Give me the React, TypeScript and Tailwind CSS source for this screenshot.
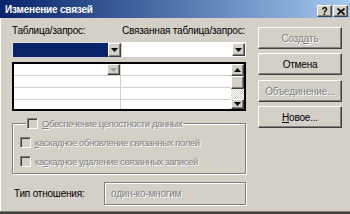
const raised =
  'border border-t-white border-l-white border-r-[#404040] border-b-[#404040] shadow-[inset_-1px_-1px_0_#808080] bg-[#d4d0c8]';
const disabledText = 'text-[#808080] [text-shadow:1px_1px_0_#fff]';

function Arrow({ up = false, color = '#000' }: { up?: boolean; color?: string }) {
  return (
    <svg width="7" height="4" viewBox="0 0 7 4">
      <polygon points={up ? '3.5,0 7,4 0,4' : '0,0 7,0 3.5,4'} fill={color} />
    </svg>
  );
}

function DropButton({ h = 'h-[13px]', color = '#000' }: { h?: string; color?: string }) {
  return (
    <div className={`${raised} w-[13px] ${h} flex items-center justify-center shrink-0`}>
      <Arrow color={color} />
    </div>
  );
}

function CheckBox() {
  return (
    <div className="w-[11px] h-[11px] shrink-0 border border-t-[#808080] border-l-[#808080] border-r-white border-b-white shadow-[inset_1px_1px_0_#404040] bg-[#d4d0c8]" />
  );
}

function Btn({ children, disabled = false, className = '' }: { children: React.ReactNode; disabled?: boolean; className?: string }) {
  return (
    <div className={`${raised} h-[22px] flex items-center justify-center ${disabled ? disabledText : 'text-black'} ${className}`}>
      {children}
    </div>
  );
}

const checkLabel = `text-[9.5px] tracking-[-0.4px] ${disabledText}`;

export default function App() {
  return (
    <div className="w-[350px] h-[214px] bg-[#d4d0c8] overflow-hidden flex flex-col font-['Liberation_Sans',Arial,sans-serif] text-[10px] tracking-[-0.2px] leading-[13px] whitespace-nowrap text-black">
      <div className="h-[18px] shrink-0 flex bg-linear-to-r from-[#0a246a] to-[#a6caf0] pl-[5px] pr-[2px]">
        <span className="self-center font-bold text-white text-[10px]">Изменение связей</span>
        <div className="ml-auto self-end mb-[1px] flex gap-[1px]">
          <div className={`${raised} w-[15px] h-[12px] flex items-center justify-center font-bold text-[10px]`}>?</div>
          <div className={`${raised} w-[15px] h-[12px] flex items-center justify-center`}>
            <svg width="8" height="7" viewBox="0 0 8 7">
              <path d="M0.5 0.5 L7.5 6.5 M7.5 0.5 L0.5 6.5" stroke="#000" strokeWidth="1.6" />
            </svg>
          </div>
        </div>
      </div>

      <div className="flex-1 flex border-l border-white pl-[11px]">
        <div className="w-[234px] flex flex-col pt-[6px]">
          <div className="flex h-[13px]">
            <span className="w-[110px]">Таблица/запрос:</span>
            <span>Связанная таблица/запрос:</span>
          </div>

          <div className="flex h-[15px] mt-[5px] gap-[1px]">
            <div className="w-[109px] flex bg-[#0a246a] border-t border-l border-[#e4e4e4]">
              <div className="flex-1" />
              <DropButton h="h-[14px]" />
            </div>
            <div className="flex-1 flex bg-white pt-[1px] pr-[1px]">
              <div className="flex-1" />
              <DropButton />
            </div>
          </div>

          <div className="h-[49px] mt-[5px] border-2 border-black bg-white flex">
            <div className="flex-1 flex flex-col">
              {[0, 1, 2, 3].map((i) => (
                <div key={i} className={`flex ${i < 3 ? 'h-[12px] border-b border-[#d4d0c8]' : 'flex-1'}`}>
                  <div className="w-[107px] flex justify-end border-r border-[#d4d0c8]">
                    {i === 0 && <DropButton h="h-[11px]" color="#a0a0a0" />}
                  </div>
                  <div className="flex-1" />
                </div>
              ))}
            </div>
            <div className="w-[13px] flex flex-col">
              <div className={`${raised} h-[12px] flex items-center justify-center`}>
                <Arrow up />
              </div>
              <div className={`${raised} h-[13px]`} />
              <div className="flex-1 bg-[conic-gradient(#fff_25%,#d4d0c8_0_50%,#fff_0_75%,#d4d0c8_0)] bg-size-[2px_2px]" />
              <div className={`${raised} h-[10px] flex items-center justify-center`}>
                <Arrow />
              </div>
            </div>
          </div>

          <fieldset className="mt-[6px] h-[57px] border border-[#808080] shadow-[1px_1px_0_#fff,inset_1px_1px_0_#fff] pl-[7px] flex flex-col">
            <legend className="ml-[6px] px-[1px] bg-[#d4d0c8]">
              <div className="flex items-center gap-[4px] h-[13px]">
                <CheckBox />
                <span className={checkLabel}>
                  <u>О</u>беспечение целостности данных
                </span>
              </div>
            </legend>
            <div className="flex items-center gap-[4px] h-[13px] mt-[6px]">
              <CheckBox />
              <span className={checkLabel}>
                <u>к</u>аскадное обновление связанных полей
              </span>
            </div>
            <div className="flex items-center gap-[4px] h-[13px] mt-[6px]">
              <CheckBox />
              <span className={checkLabel}>
                ка<u>с</u>кадное удаление связанных записей
              </span>
            </div>
          </fieldset>

          <div className="flex items-center mt-[8px] h-[23px]">
            <span className="w-[92px] pl-[2px]">Тип отношения:</span>
            <div className={`flex-1 h-full flex items-center pl-[6px] border border-[#808080] shadow-[1px_1px_0_#fff,inset_1px_1px_0_#fff] ${disabledText}`}>
              один-ко-многим
            </div>
          </div>
        </div>

        <div className="w-[84px] ml-[12px] pt-[9px] flex flex-col">
          <Btn disabled>
            Созд<u>а</u>ть
          </Btn>
          <Btn className="mt-[4px]">Отмена</Btn>
          <Btn disabled className="mt-[5px]">
            Объе<u>д</u>инение...
          </Btn>
          <Btn className="mt-[4px]">
            <u>Н</u>овое...
          </Btn>
        </div>
      </div>
      <div className="h-[3px] shrink-0 border-t border-[#808080] bg-[#404040]" />
    </div>
  );
}
